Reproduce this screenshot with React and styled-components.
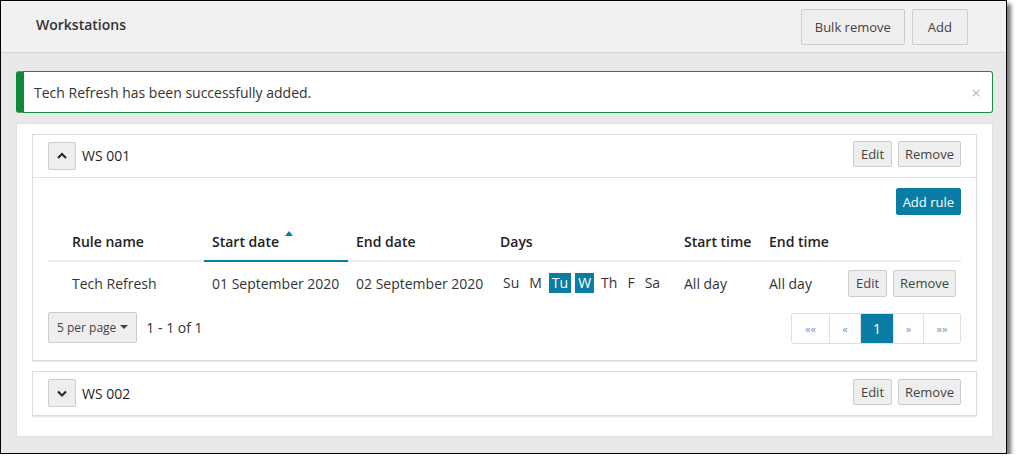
import React from "react";
import styled, { createGlobalStyle } from "styled-components";

const colors = {
  teal: "#0a7da4",
  text: "#333",
  border: "#ccc",
  btnBg: "#eeeeee",
  line: "#e3e3e3",
};

const GlobalStyle = createGlobalStyle`
  body {
    margin: 0;
    background: #fff;
    font-family: "Open Sans", "Noto Sans", sans-serif;
    color: ${colors.text};
  }
  * { box-sizing: border-box; }
`;

const Frame = styled.div`
  width: 1007px;
  height: 454px;
  border: 1px solid #000;
  background: #e9e9e9;
  box-shadow: 4px 4px 4px rgba(0, 0, 0, 0.55);
  display: flex;
  flex-direction: column;
  overflow: hidden;
`;

const TopBar = styled.div`
  height: 52px;
  flex-shrink: 0;
  background: #f1f1f1;
  border-bottom: 1px solid #d4d4d4;
  display: flex;
  align-items: center;
  justify-content: space-between;
  padding: 0 38px 0 35px;
`;

const Title = styled.div`
  font-size: 14px;
  font-weight: 600;
  color: #333;
  margin-top: -5px;
`;

const Button = styled.button`
  font-family: inherit;
  font-size: ${(p) => p.size || 13}px;
  color: #444;
  background: ${colors.btnBg};
  border: 1px solid ${colors.border};
  border-radius: 2px;
  height: ${(p) => p.h || 27}px;
  padding: 0 ${(p) => p.px || 7}px;
  display: inline-flex;
  align-items: center;
  gap: 4px;
  cursor: pointer;
`;

const PrimaryButton = styled(Button)`
  background: ${colors.teal};
  border-color: ${colors.teal};
  color: #fff;
  font-weight: 500;
`;

const ButtonRow = styled.div`
  display: flex;
  gap: ${(p) => p.gap || 6}px;
  align-items: center;
  margin-top: ${(p) => p.lift || 0}px;
`;

const Content = styled.div`
  padding: 18px 13px 0 15px;
  display: flex;
  flex-direction: column;
  gap: 10px;
`;

const Alert = styled.div`
  height: 42px;
  background: #fff;
  border: 1px solid #1a8a3e;
  border-left: 8px solid #0f8a3a;
  border-radius: 3px;
  display: flex;
  align-items: center;
  justify-content: space-between;
  padding: 0 11px 0 10px;
  font-size: 14px;
`;

const Close = styled.span`
  color: #bbb;
  font-size: 17px;
  line-height: 1;
  margin-top: 1px;
`;

const Card = styled.div`
  background: #fff;
  border: 1px solid #e0e0e0;
  padding: 10px 15px 20px 15px;
  display: flex;
  flex-direction: column;
  gap: 10px;
`;

const Panel = styled.div`
  border: 1px solid #dcdcdc;
  box-shadow: 0 1px 1px rgba(0, 0, 0, 0.08);
`;

const PanelHeader = styled.div`
  height: 43px;
  display: flex;
  align-items: center;
  justify-content: space-between;
  padding: 0 15px 1px 15px;
  border-bottom: ${(p) => (p.open ? `1px solid ${colors.line}` : "none")};
`;

const PanelTitle = styled.div`
  display: flex;
  align-items: center;
  gap: 6px;
  font-size: 14px;
  color: #1f1f1f;
`;

const Toggle = styled.button`
  width: 28px;
  height: 28px;
  background: ${colors.btnBg};
  border: 1px solid ${colors.border};
  border-radius: 2px;
  display: flex;
  align-items: center;
  justify-content: center;
  padding: 0;
`;

const PanelBody = styled.div`
  padding: 10px 15px 16px 15px;
  display: flex;
  flex-direction: column;
`;

const RightAlign = styled.div`
  display: flex;
  justify-content: flex-end;
`;

const Table = styled.table`
  width: 100%;
  border-collapse: collapse;
  margin-top: 7px;
  font-size: 14px;
  table-layout: fixed;
`;

const Th = styled.th`
  text-align: left;
  font-weight: 600;
  color: #222;
  height: 39px;
  padding: 0 8px 0 ${(p) => (p.first ? 24 : 8)}px;
  border-bottom: 2px solid ${(p) => (p.sorted ? colors.teal : "#ececec")};
  position: relative;
  white-space: nowrap;
`;

const SortArrow = styled.span`
  position: absolute;
  top: 9px;
  left: 81px;
  width: 0;
  height: 0;
  border-left: 4px solid transparent;
  border-right: 4px solid transparent;
  border-bottom: 5px solid ${colors.teal};
`;

const Td = styled.td`
  height: 44px;
  padding: 0 8px 1px ${(p) => (p.first ? 24 : 8)}px;
  color: #333;
  white-space: nowrap;
`;

const Days = styled.div`
  display: flex;
  gap: 4px;
  align-items: center;
`;

const Day = styled.span`
  padding: 1px 3px;
  line-height: 18px;
  background: ${(p) => (p.on ? colors.teal : "transparent")};
  color: ${(p) => (p.on ? "#fff" : "#333")};
`;

const Footer = styled.div`
  display: flex;
  justify-content: space-between;
  align-items: center;
  margin-top: 8px;
`;

const PerPage = styled.div`
  display: flex;
  align-items: center;
  gap: 9px;
  font-size: 14px;
  margin-top: -3px;
`;

const Caret = styled.span`
  width: 0;
  height: 0;
  border-left: 4px solid transparent;
  border-right: 4px solid transparent;
  border-top: 4px solid #444;
`;

const Pager = styled.div`
  display: flex;
  border: 1px solid #dedede;
  border-radius: 3px;
  height: 31px;
  overflow: hidden;
`;

const PageCell = styled.div`
  width: ${(p) => p.w}px;
  display: flex;
  align-items: center;
  justify-content: center;
  font-size: ${(p) => (p.active ? 14 : 11)}px;
  color: ${(p) => (p.active ? "#fff" : "#6f97c8")};
  background: ${(p) => (p.active ? colors.teal : "#fff")};
  border-left: ${(p) => (p.firstCell ? "none" : "1px solid #e2e2e2")};
`;

function Chevron({ up }) {
  return (
    <svg width="12" height="9" viewBox="0 0 12 9">
      <polyline
        points={up ? "2,7 6,3 10,7" : "2,2.5 6,6.5 10,2.5"}
        fill="none"
        stroke="#2a2a2a"
        strokeWidth="2.2"
      />
    </svg>
  );
}

function PanelActions({ h, lift }) {
  return (
    <ButtonRow lift={lift}>
      <Button h={h} px={7}>Edit</Button>
      <Button h={h} px={6}>Remove</Button>
    </ButtonRow>
  );
}

const days = [
  ["Su", false],
  ["M", false],
  ["Tu", true],
  ["W", true],
  ["Th", false],
  ["F", false],
  ["Sa", false],
];

export default function App() {
  return (
    <>
      <GlobalStyle />
      <Frame>
        <TopBar>
          <Title>Workstations</Title>
          <ButtonRow gap={7}>
            <Button h={36} px={13}>Bulk remove</Button>
            <Button h={36} px={15}>Add</Button>
          </ButtonRow>
        </TopBar>
        <Content>
          <Alert>
            <span>Tech Refresh has been successfully added.</span>
            <Close>×</Close>
          </Alert>
          <Card>
            <Panel>
              <PanelHeader open>
                <PanelTitle>
                  <Toggle>
                    <Chevron up />
                  </Toggle>
                  WS 001
                </PanelTitle>
                <PanelActions h={26} lift={-3} />
              </PanelHeader>
              <PanelBody>
                <RightAlign>
                  <PrimaryButton px={6}>Add rule</PrimaryButton>
                </RightAlign>
                <Table>
                  <colgroup>
                    <col style={{ width: 156 }} />
                    <col style={{ width: 144 }} />
                    <col style={{ width: 144 }} />
                    <col style={{ width: 184 }} />
                    <col style={{ width: 85 }} />
                    <col style={{ width: 79 }} />
                    <col style={{ width: 121 }} />
                  </colgroup>
                  <thead>
                    <tr>
                      <Th first>Rule name</Th>
                      <Th sorted>
                        Start date
                        <SortArrow />
                      </Th>
                      <Th>End date</Th>
                      <Th>Days</Th>
                      <Th>Start time</Th>
                      <Th>End time</Th>
                      <Th />
                    </tr>
                  </thead>
                  <tbody>
                    <tr>
                      <Td first>Tech Refresh</Td>
                      <Td>01 September 2020</Td>
                      <Td>02 September 2020</Td>
                      <Td>
                        <Days>
                          {days.map(([d, on]) => (
                            <Day key={d} on={on}>
                              {d}
                            </Day>
                          ))}
                        </Days>
                      </Td>
                      <Td>All day</Td>
                      <Td>All day</Td>
                      <Td>
                        <PanelActions h={27} />
                      </Td>
                    </tr>
                  </tbody>
                </Table>
                <Footer>
                  <PerPage>
                    <Button h={31} size={12} px={8}>
                      5 per page <Caret />
                    </Button>
                    <span>1 - 1 of 1</span>
                  </PerPage>
                  <Pager>
                    <PageCell w={37} firstCell>««</PageCell>
                    <PageCell w={31}>«</PageCell>
                    <PageCell w={33} active>1</PageCell>
                    <PageCell w={30}>»</PageCell>
                    <PageCell w={37}>»»</PageCell>
                  </Pager>
                </Footer>
              </PanelBody>
            </Panel>
            <Panel>
              <PanelHeader>
                <PanelTitle>
                  <Toggle>
                    <Chevron />
                  </Toggle>
                  WS 002
                </PanelTitle>
                <PanelActions h={26} lift={-3} />
              </PanelHeader>
            </Panel>
          </Card>
        </Content>
      </Frame>
    </>
  );
}
